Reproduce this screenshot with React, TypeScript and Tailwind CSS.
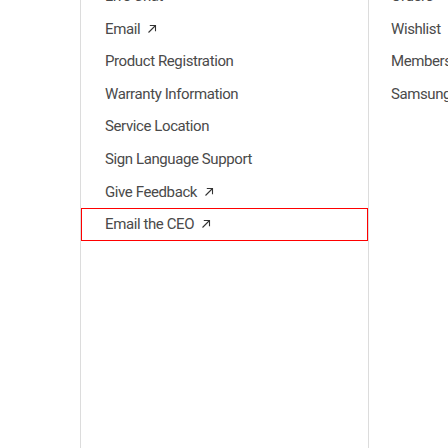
import React from 'react';

const ArrowIcon: React.FC = () => (
  <svg width="10" height="10" viewBox="0 0 10 10" className="ml-[7px] inline-block" fill="none" stroke="#333" strokeWidth="1.1">
    <path d="M1.5 8.5 L8.5 1.5" />
    <path d="M2.8 1.5 H8.5 V7.2" />
  </svg>
);

const supportLinks = [
  { label: 'Live Chat', external: true },
  { label: 'Email', external: true },
  { label: 'Product Registration', external: false },
  { label: 'Warranty Information', external: false },
  { label: 'Service Location', external: false },
  { label: 'Sign Language Support', external: false },
  { label: 'Give Feedback', external: true },
  { label: 'Email the CEO', external: true, focused: true },
];

const accountLinks = ['Orders', 'Wishlist', 'Membership', 'Samsung Rewards'];

const App: React.FC = () => {
  return (
    <div className="h-[448px] w-[448px] overflow-hidden bg-white font-['Roboto',sans-serif] text-[15px] tracking-[-0.4px] text-[#4a4a4a]">
      <div className="flex h-full">
        <div className="w-[80px] shrink-0"></div>
        <div className="w-[288px] shrink-0 border-l border-[#dcdcdc]">
          <ul className="-mt-[20px]">
            {supportLinks.map((link, index) => (
              <li
                key={index}
                className={
                  link.focused
                    ? 'flex h-[32.6px] items-center whitespace-nowrap border border-[#f00] pl-[23px]'
                    : 'flex h-[32.6px] items-center whitespace-nowrap pl-[24px]'
                }
              >
                {link.label}
                {link.external && <ArrowIcon />}
              </li>
            ))}
          </ul>
        </div>
        <div className="flex-1 overflow-hidden border-l border-[#dcdcdc]">
          <ul className="-mt-[20px]">
            {accountLinks.map((label, index) => (
              <li key={index} className="flex h-[32.6px] items-center whitespace-nowrap pl-[22px]">
                {label}
              </li>
            ))}
          </ul>
        </div>
      </div>
    </div>
  );
};

export default App;
